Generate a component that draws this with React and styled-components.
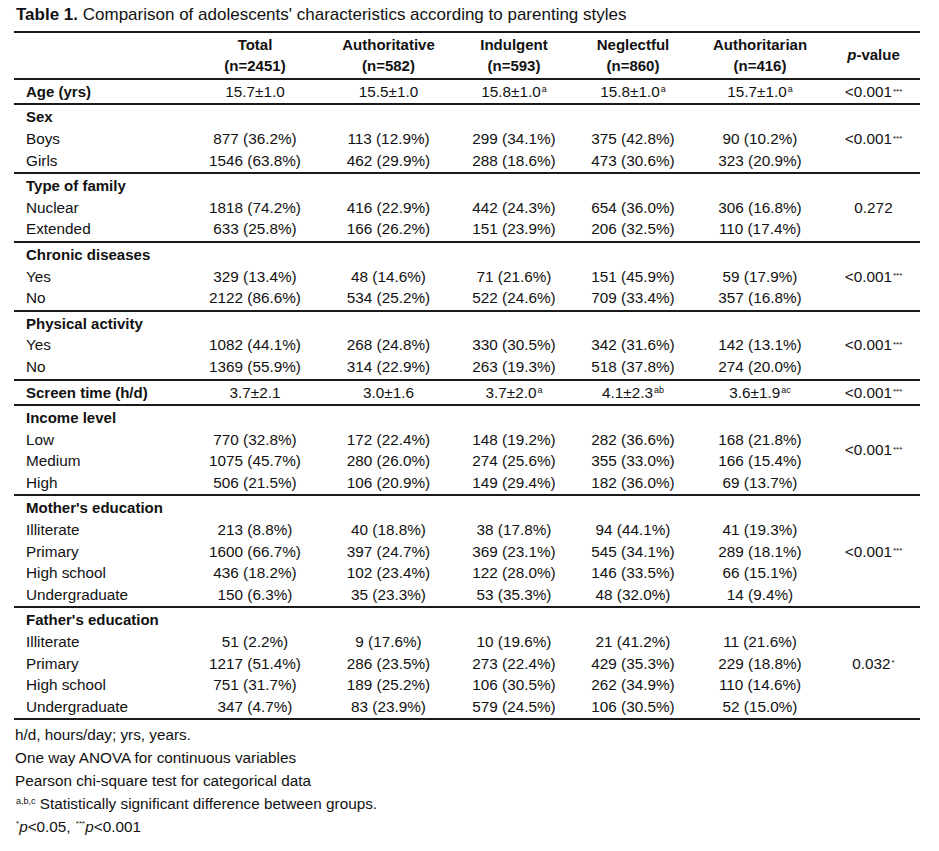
import React from 'react';
import styled, { createGlobalStyle } from 'styled-components';

const Global = createGlobalStyle`
  html, body { margin: 0; padding: 0; background: #fff; }
  body { font-family: "Liberation Sans", Arial, sans-serif; color: #111; }
`;

const COLS = '174px 134px 133px 118px 120px 134px';
const ROW_H = 21.6;

const Page = styled.div`
  padding: 4px 19px 0 14px;
  width: 906px;
  font-size: 15.3px;
`;

const Title = styled.div`
  font-size: 17px;
  line-height: ${ROW_H}px;
  margin-bottom: 5px;
  padding-left: 2px;
  white-space: nowrap;
  b { font-weight: 700; }
`;

const Table = styled.div`
  width: 906px;
  border-bottom: 2px solid #1a1a1a;
`;

const Section = styled.div`
  display: flex;
  border-top: 2px solid #1a1a1a;
  padding: 1px 0;
`;

const Grid = styled.div`
  display: grid;
  grid-template-columns: ${COLS};
  grid-auto-rows: ${ROW_H}px;
  width: 813px;
`;

const Label = styled.div`
  padding-left: 12px;
  line-height: ${ROW_H}px;
  white-space: nowrap;
  font-weight: ${(p) => (p.$bold ? 700 : 400)};
  font-size: ${(p) => (p.$bold ? '15px' : 'inherit')};
`;

const Cell = styled.div`
  text-align: center;
  line-height: ${ROW_H}px;
  white-space: nowrap;
`;

const PCell = styled.div`
  width: 93px;
  display: flex;
  align-items: center;
  justify-content: center;
  line-height: ${ROW_H}px;
  white-space: nowrap;
  font-weight: ${(p) => (p.$bold ? 700 : 400)};
  font-size: ${(p) => (p.$bold ? '15px' : 'inherit')};
`;

const HeadCell = styled.div`
  grid-row: span 2;
  display: flex;
  flex-direction: column;
  align-items: center;
  font-weight: 700;
  font-size: 15px;
  line-height: ${ROW_H}px;
`;

const Sup = styled.sup`
  font-size: 9px;
  line-height: 0;
  vertical-align: 5px;
  margin-left: 1px;
`;

const Stars = styled.sup`
  font-size: 8px;
  line-height: 0;
  vertical-align: 6px;
  margin-left: 1px;
`;

const Notes = styled.div`
  margin-top: 4px;
  line-height: 22.8px;
  padding-left: 1px;
`;

const Note = styled.div`
  white-space: nowrap;
`;

const It = styled.i`
  font-style: italic;
`;

const columns = [
  ['Total', '(n=2451)'],
  ['Authoritative', '(n=582)'],
  ['Indulgent', '(n=593)'],
  ['Neglectful', '(n=860)'],
  ['Authoritarian', '(n=416)'],
];

const P001 = ['<0.001', '***'];

const sections = [
  {
    label: 'Age (yrs)',
    values: ['15.7±1.0', '15.5±1.0', ['15.8±1.0', 'a'], ['15.8±1.0', 'a'], ['15.7±1.0', 'a']],
    p: P001,
  },
  {
    label: 'Sex',
    rows: [
      ['Boys', '877 (36.2%)', '113 (12.9%)', '299 (34.1%)', '375 (42.8%)', '90 (10.2%)'],
      ['Girls', '1546 (63.8%)', '462 (29.9%)', '288 (18.6%)', '473 (30.6%)', '323 (20.9%)'],
    ],
    p: P001,
  },
  {
    label: 'Type of family',
    rows: [
      ['Nuclear', '1818 (74.2%)', '416 (22.9%)', '442 (24.3%)', '654 (36.0%)', '306 (16.8%)'],
      ['Extended', '633 (25.8%)', '166 (26.2%)', '151 (23.9%)', '206 (32.5%)', '110 (17.4%)'],
    ],
    p: ['0.272'],
  },
  {
    label: 'Chronic diseases',
    rows: [
      ['Yes', '329 (13.4%)', '48 (14.6%)', '71 (21.6%)', '151 (45.9%)', '59 (17.9%)'],
      ['No', '2122 (86.6%)', '534 (25.2%)', '522 (24.6%)', '709 (33.4%)', '357 (16.8%)'],
    ],
    p: P001,
  },
  {
    label: 'Physical activity',
    rows: [
      ['Yes', '1082 (44.1%)', '268 (24.8%)', '330 (30.5%)', '342 (31.6%)', '142 (13.1%)'],
      ['No', '1369 (55.9%)', '314 (22.9%)', '263 (19.3%)', '518 (37.8%)', '274 (20.0%)'],
    ],
    p: P001,
  },
  {
    label: 'Screen time (h/d)',
    values: ['3.7±2.1', '3.0±1.6', ['3.7±2.0', 'a'], ['4.1±2.3', 'ab'], ['3.6±1.9', 'ac']],
    p: P001,
  },
  {
    label: 'Income level',
    rows: [
      ['Low', '770 (32.8%)', '172 (22.4%)', '148 (19.2%)', '282 (36.6%)', '168 (21.8%)'],
      ['Medium', '1075 (45.7%)', '280 (26.0%)', '274 (25.6%)', '355 (33.0%)', '166 (15.4%)'],
      ['High', '506 (21.5%)', '106 (20.9%)', '149 (29.4%)', '182 (36.0%)', '69 (13.7%)'],
    ],
    p: P001,
  },
  {
    label: "Mother's education",
    rows: [
      ['Illiterate', '213 (8.8%)', '40 (18.8%)', '38 (17.8%)', '94 (44.1%)', '41 (19.3%)'],
      ['Primary', '1600 (66.7%)', '397 (24.7%)', '369 (23.1%)', '545 (34.1%)', '289 (18.1%)'],
      ['High school', '436 (18.2%)', '102 (23.4%)', '122 (28.0%)', '146 (33.5%)', '66 (15.1%)'],
      ['Undergraduate', '150 (6.3%)', '35 (23.3%)', '53 (35.3%)', '48 (32.0%)', '14 (9.4%)'],
    ],
    p: P001,
  },
  {
    label: "Father's education",
    rows: [
      ['Illiterate', '51 (2.2%)', '9 (17.6%)', '10 (19.6%)', '21 (41.2%)', '11 (21.6%)'],
      ['Primary', '1217 (51.4%)', '286 (23.5%)', '273 (22.4%)', '429 (35.3%)', '229 (18.8%)'],
      ['High school', '751 (31.7%)', '189 (25.2%)', '106 (30.5%)', '262 (34.9%)', '110 (14.6%)'],
      ['Undergraduate', '347 (4.7%)', '83 (23.9%)', '579 (24.5%)', '106 (30.5%)', '52 (15.0%)'],
    ],
    p: ['0.032', '*'],
  },
];

function Value({ v }) {
  if (Array.isArray(v)) {
    return (
      <>
        {v[0]}
        <Sup>{v[1]}</Sup>
      </>
    );
  }
  return v;
}

function PValue({ p }) {
  return (
    <PCell>
      {p[0]}
      {p[1] && <Stars>{p[1]}</Stars>}
    </PCell>
  );
}

function SectionBlock({ s }) {
  if (s.values) {
    return (
      <Section>
        <Grid>
          <Label $bold>{s.label}</Label>
          {s.values.map((v, i) => (
            <Cell key={i}>
              <Value v={v} />
            </Cell>
          ))}
        </Grid>
        <PValue p={s.p} />
      </Section>
    );
  }
  return (
    <Section>
      <Grid>
        <Label $bold>{s.label}</Label>
        {columns.map((_, i) => (
          <Cell key={i} />
        ))}
        {s.rows.map((r) => (
          <React.Fragment key={r[0]}>
            <Label>{r[0]}</Label>
            {r.slice(1).map((v, i) => (
              <Cell key={i}>{v}</Cell>
            ))}
          </React.Fragment>
        ))}
      </Grid>
      <PValue p={s.p} />
    </Section>
  );
}

export default function App() {
  return (
    <>
      <Global />
      <Page>
        <Title>
          <b>Table 1.</b> Comparison of adolescents' characteristics according to parenting styles
        </Title>
        <Table>
          <Section>
            <Grid>
              <HeadCell />
              {columns.map(([a, b]) => (
                <HeadCell key={a}>
                  <span>{a}</span>
                  <span>{b}</span>
                </HeadCell>
              ))}
            </Grid>
            <PCell $bold>
              <It>p</It>-value
            </PCell>
          </Section>
          {sections.map((s) => (
            <SectionBlock key={s.label} s={s} />
          ))}
        </Table>
        <Notes>
          <Note>h/d, hours/day; yrs, years.</Note>
          <Note>One way ANOVA for continuous variables</Note>
          <Note>Pearson chi-square test for categorical data</Note>
          <Note>
            <Sup>a,b,c</Sup> Statistically significant difference between groups.
          </Note>
          <Note>
            <Stars>*</Stars>
            <It>p</It>&lt;0.05, <Stars>***</Stars>
            <It>p</It>&lt;0.001
          </Note>
        </Notes>
      </Page>
    </>
  );
}
